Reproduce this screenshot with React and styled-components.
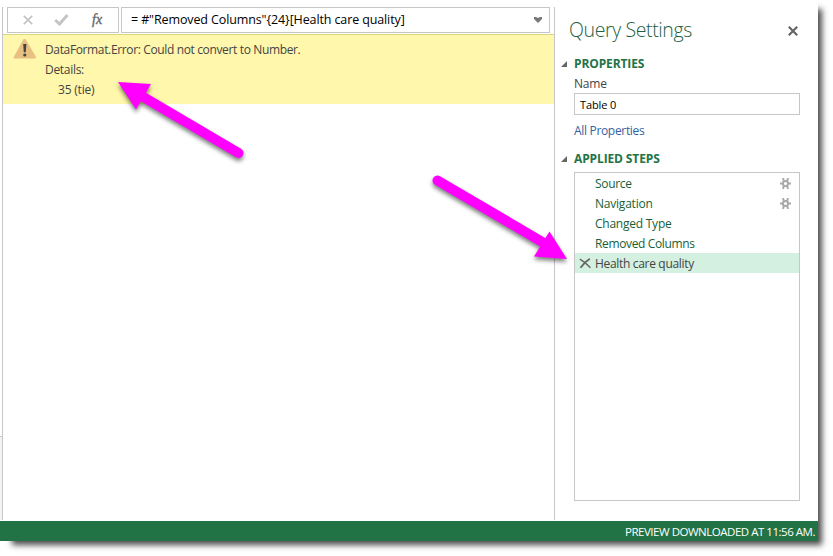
import React from "react";
import styled, { createGlobalStyle } from "styled-components";

const GlobalStyle = createGlobalStyle`
  * { box-sizing: border-box; }
  body {
    margin: 0;
    background: #fff;
    overflow: hidden;
    font-family: "Open Sans", "Noto Sans", sans-serif;
    font-size: 12px;
    color: #444;
  }
`;

const Stage = styled.div`
  position: relative;
  width: 833px;
  height: 556px;
  overflow: hidden;
`;

const Window = styled.div`
  display: flex;
  flex-direction: column;
  width: 818px;
  height: 541px;
  background: #fff;
`;

const WindowShadow = styled.div`
  position: absolute;
  left: 8px;
  top: 5px;
  width: 810px;
  height: 536px;
  box-shadow: 4px 4px 6px rgba(0, 0, 0, 0.7);
  z-index: -1;
`;

const Body = styled.div`
  display: flex;
  height: 521px;
  padding: 7px 0 1px;
`;

const Gutter = styled.div`
  width: 2px;
  height: 84px;
  align-self: flex-end;
  background: #f3f3f3;
  border-top: 1px solid #c6c6c6;
`;

const Preview = styled.main`
  width: 553px;
  border: solid #c6c6c6;
  border-width: 0 1px;
`;

const FormulaBar = styled.div`
  display: flex;
  gap: 2px;
  height: 27px;
  padding-left: 4px;
`;

const Actions = styled.div`
  display: flex;
  align-items: center;
  width: 112px;
  height: 26px;
  padding-left: 15px;
  border: 1px solid #c6c6c6;
`;

const Formula = styled.div`
  display: flex;
  align-items: center;
  justify-content: space-between;
  width: 429px;
  height: 26px;
  padding: 0 7px 0 9px;
  border: 1px solid #c6c6c6;
  color: #000;
`;

const Label = styled.span`
  display: block;
  white-space: pre;
  font-size: ${(p) => p.$size || 12}px;
  line-height: ${(p) => p.$line || 20}px;
  letter-spacing: ${(p) => p.$track || 0}px;
`;

const Title = styled(Label)`
  padding-top: 1px;
  font-weight: 300;
`;

const ErrorPanel = styled.div`
  display: flex;
  height: 70px;
  padding: 4px 0 0 10px;
  gap: 8px;
  background: #fff7ab;
  border-top: 1px solid #dcd784;
`;

const ErrorText = styled.div`
  padding-top: 1px;
  color: #444;
`;

const Detail = styled.div`
  padding-left: 13px;
`;

const Settings = styled.aside`
  width: 263px;
  padding: 7px 18px 0 6px;
`;

const Header = styled.header`
  display: flex;
  align-items: center;
  justify-content: space-between;
  height: 30px;
  padding: 0 2px 0 8px;
  color: #1d6044;
`;

const CloseButton = styled.span`
  display: flex;
  padding-top: 3px;
`;

const SectionTitle = styled.h2`
  display: flex;
  align-items: center;
  gap: 7px;
  height: 20px;
  margin: ${(p) => p.$top}px 0 0;
  color: #217346;
  font-weight: 700;
`;

const Section = styled.section`
  padding-left: 13px;
`;

const NameInput = styled.div`
  height: 22px;
  margin-top: -1px;
  padding: 1px 0 0 5px;
  border: 1px solid #c6c6c6;
  color: #000;
`;

const PropertiesLink = styled.div`
  padding-top: 6px;
  color: #3461a0;
`;

const StepList = styled.div`
  height: 329px;
  margin-top: 3px;
  border: 1px solid #c6c6c6;
`;

const Step = styled.div`
  display: flex;
  align-items: center;
  height: 20px;
  padding-right: 8px;
  color: ${(p) => (p.$selected ? "#444" : "#165f38")};
  background: ${(p) => (p.$selected ? "#d3f0e0" : "transparent")};
`;

const StepMark = styled.div`
  display: flex;
  justify-content: center;
  width: 20px;
`;

const StepName = styled.div`
  flex: 1;
  padding-top: 1px;
`;

const StatusBar = styled.footer`
  display: flex;
  justify-content: flex-end;
  height: 20px;
  padding: 1px 3px 0 0;
  background: #217346;
  color: #fff;
`;

const Arrows = styled.svg`
  position: absolute;
  inset: 0;
  filter: drop-shadow(0 3px 2px rgba(0, 0, 0, 0.5));
`;

const FxLabel = styled.span`
  margin-left: 23px;
  margin-top: -1px;
  font: italic 400 14px "Liberation Serif", serif;
  -webkit-text-stroke: 0.35px #666;
  color: #666;
`;

const Check = styled.svg`
  margin-left: 21px;
`;

const Cross = ({ size, color, width }) => (
  <svg width={size} height={size} viewBox="0 0 10 10" fill="none">
    <path d="M.8 .8 9.2 9.2M9.2 .8 .8 9.2" stroke={color} strokeWidth={width} />
  </svg>
);

const DeleteMark = () => (
  <svg width="12" height="11" viewBox="0 0 12 11" fill="none" stroke="#666">
    <path d="M.8 1.200Q6 4 11.500 9.800" strokeWidth="1.500" />
    <path d="M10.800 .8Q5 4.500 1.500 9.800" strokeWidth="1.800" />
  </svg>
);

const Warning = () => (
  <svg width="24" height="22" viewBox="0 0 24 22">
    <path d="M10.300 .4Q11.500 -.8 12.700 .6L22.700 17.500Q23.700 19.500 22 19.500H1.700Q0 19.500 1 17.500Z" fill="#e8c081" />
    <path d="M10.200 5h3.200l-.6 8.300h-2z" fill="#444" />
    <circle cx="11.800" cy="16" r="1.600" fill="#444" />
  </svg>
);

const Gear = () => (
  <svg width="11" height="11" viewBox="0 0 11 11" fill="none" stroke="#a9a9a9">
    <circle cx="5.500" cy="5.500" r="2.600" strokeWidth="2" />
    <path d="M3 0 3.800 3M8 0 7.200 3M3 11 3.800 8M8 11 7.200 8M0 5.500h3M8 5.500h3" strokeWidth="2" />
  </svg>
);

const Collapse = () => (
  <svg width="6" height="6" viewBox="0 0 6 6">
    <path d="M6 0V6H0Z" fill="#666" />
  </svg>
);

const steps = [
  { name: "Source", gear: true, track: -0.3 },
  { name: "Navigation", gear: true, track: -0.22 },
  { name: "Changed Type", track: -0.24 },
  { name: "Removed Columns", track: -0.36 },
  { name: "Health care quality", selected: true, track: -0.32 },
];

export default function App() {
  return (
    <Stage>
      <GlobalStyle />
      <WindowShadow />
      <Window>
        <Body>
          <Gutter />
          <Preview>
            <FormulaBar>
              <Actions>
                <Cross size={10} color="#c4c4c4" width={1.7} />
                <Check width="15" height="12" viewBox="0 0 15 12" fill="none">
                  <path d="M1.200 6 5.500 10 13.500 1" stroke="#c4c4c4" strokeWidth="3" />
                </Check>
                <FxLabel>fx</FxLabel>
              </Actions>
              <Formula>
                <Label $size={12.5} $track={-0.12}>= #"Removed Columns"{"{24}"}[Health care quality]</Label>
                <svg width="8" height="6" viewBox="0 0 8 6">
                  <path d="M0 0h2l2 1 2-1h2v2L4 6 0 2Z" fill="#777" />
                </svg>
              </Formula>
            </FormulaBar>
            <ErrorPanel>
              <Warning />
              <ErrorText>
                <Label $track={-0.36}>DataFormat.Error: Could not convert to Number.</Label>
                <Label $track={-0.3}>Details:</Label>
                <Detail>
                  <Label $track={-0.2}>35 (tie)</Label>
                </Detail>
              </ErrorText>
            </ErrorPanel>
          </Preview>
          <Settings>
            <Header>
              <Title $size={19.5} $line={28} $track={-0.38}>Query Settings</Title>
              <CloseButton>
                <Cross size={10} color="#666" width={2.2} />
              </CloseButton>
            </Header>
            <SectionTitle $top={10}>
              <Collapse />
              <Label $track={-0.12}>PROPERTIES</Label>
            </SectionTitle>
            <Section>
              <Label $track={-0.2}>Name</Label>
              <NameInput>
                <Label $size={11} $track={-0.1}>Table 0</Label>
              </NameInput>
              <PropertiesLink>
                <Label $track={-0.32}>All Properties</Label>
              </PropertiesLink>
            </Section>
            <SectionTitle $top={8}>
              <Collapse />
              <Label $track={-0.12}>APPLIED STEPS</Label>
            </SectionTitle>
            <Section>
              <StepList>
                {steps.map((step) => (
                  <Step key={step.name} $selected={step.selected}>
                    <StepMark>{step.selected && <DeleteMark />}</StepMark>
                    <StepName>
                      <Label $track={step.track}>{step.name}</Label>
                    </StepName>
                    {step.gear && <Gear />}
                  </Step>
                ))}
              </StepList>
            </Section>
          </Settings>
        </Body>
        <StatusBar>
          <Label $size={11.5} $track={-0.48}>PREVIEW DOWNLOADED AT 11:56 AM.</Label>
        </StatusBar>
      </Window>
      <Arrows width="833" height="556" viewBox="0 0 833 556">
        <g fill="#f0f" stroke="#f0f">
          <path d="M238.5 153 140 95" strokeWidth="10" strokeLinecap="round" />
          <path d="M118 82 151 84 136 109.500Z" stroke="none" />
          <path d="M437.500 180.500 544 243" strokeWidth="10" strokeLinecap="round" />
          <path d="M567 259 549.500 231.500 534 256.500Z" stroke="none" />
        </g>
      </Arrows>
    </Stage>
  );
}
